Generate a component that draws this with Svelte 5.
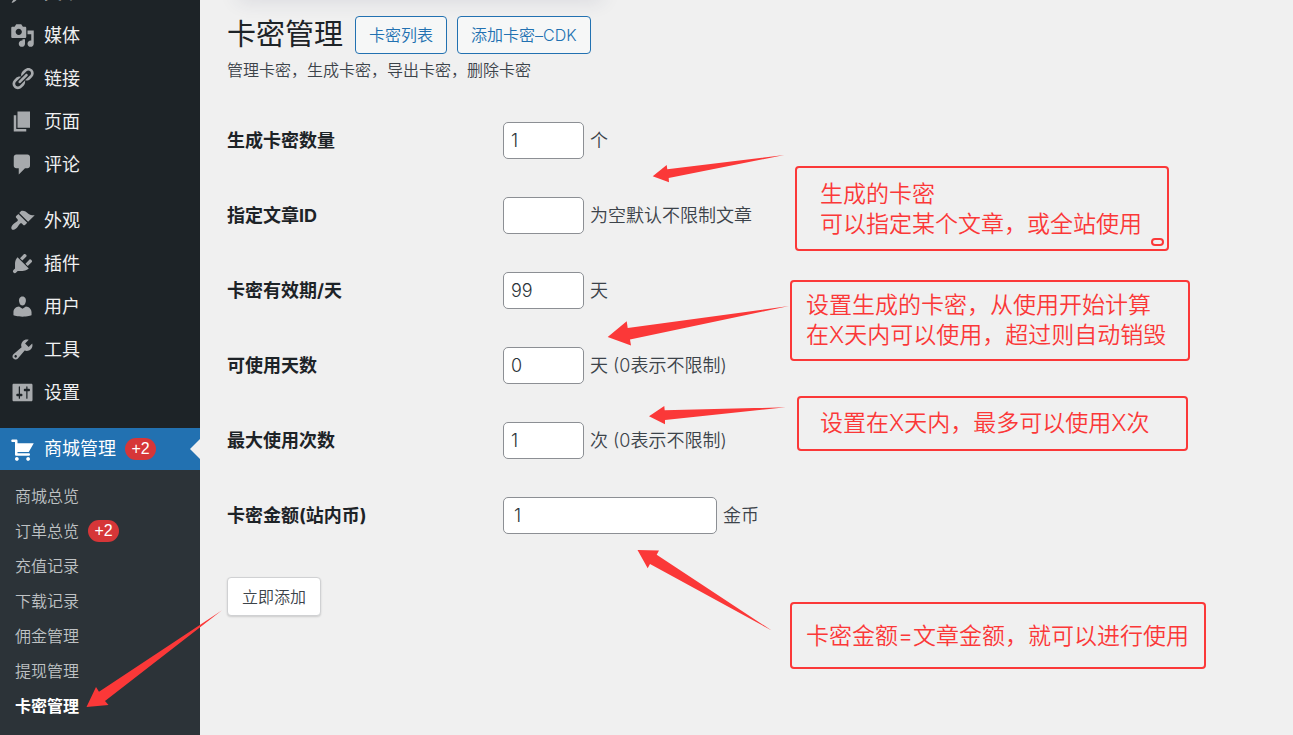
<script>
  const icons = {
    post: 'M10.44 3.02l1.82-1.82 6.36 6.35-1.83 1.82c-1.05-.68-2.48-.57-3.41.36l-.75.75c-.92.93-1.04 2.35-.35 3.41l-1.83 1.82-2.41-2.41-2.8 2.79c-.42.42-3.38 2.71-3.8 2.29s1.86-3.39 2.28-3.81l2.79-2.79L4.1 9.36l1.83-1.82c1.05.69 2.48.57 3.4-.36l.75-.75c.93-.92 1.05-2.35.36-3.41z',
    media: 'M13 11V4c0-.55-.45-1-1-1h-1.67L9 1H5L3.67 3H2c-.55 0-1 .45-1 1v7c0 .55.45 1 1 1h10c.55 0 1-.45 1-1zM7 4.5c1.38 0 2.5 1.12 2.5 2.5S8.38 9.5 7 9.5 4.5 8.38 4.5 7 5.62 4.5 7 4.5zM14 6h5v10.5c0 1.38-1.12 2.5-2.5 2.5S14 17.88 14 16.5s1.12-2.5 2.5-2.5c.17 0 .34.02.5.05V9h-3V6zm-4 8.05V13h2v3.5c0 1.38-1.12 2.5-2.5 2.5S7 17.88 7 16.5 8.12 14 9.5 14c.17 0 .34.02.5.05z',
    links: 'M17.74 2.76c1.68 1.69 1.68 4.41 0 6.1l-1.53 1.52c-1.12 1.12-2.7 1.47-4.14 1.09l2.62-2.61.76-.77.76-.76c.84-.84.84-2.2 0-3.04-.84-.85-2.2-.85-3.04 0l-.77.76-3.38 3.38c-.37-1.44-.02-3.02 1.1-4.14l1.52-1.53c1.69-1.68 4.42-1.68 6.1 0zM8.59 13.43l5.34-5.34c.42-.42.42-1.1 0-1.52-.44-.43-1.13-.39-1.53 0l-5.33 5.34c-.42.42-.42 1.1 0 1.52.44.43 1.13.39 1.52 0zm-.76 2.29l4.14-4.15c.38 1.44.03 3.02-1.09 4.14l-1.52 1.53c-1.69 1.68-4.41 1.68-6.1 0-1.68-1.68-1.68-4.42 0-6.1l1.53-1.52c1.12-1.12 2.7-1.47 4.14-1.1l-4.14 4.15c-.85.84-.85 2.2 0 3.05.84.84 2.2.84 3.04 0z',
    page: 'M6 15V2h10v13H6zm-1 1h8v2H3V5h2v11z',
    comments: 'M5 2h9c1.1 0 2 .9 2 2v7c0 1.1-.9 2-2 2h-2l-5 5v-5H5c-1.1 0-2-.9-2-2V4c0-1.1.9-2 2-2z',
    appearance: 'M14.48 11.06L7.41 3.99l1.5-1.5c.5-.56 2.3-.47 3.51.32 1.21.8 1.43 1.28 2.91 2.1 1.18.64 2.45 1.26 4.45.85zm-.71.71L6.7 4.7 4.93 6.47c-.39.39-.39 1.02 0 1.41l1.06 1.06c.39.39.39 1.03 0 1.42-.6.6-1.43 1.11-2.21 1.69-.35.26-.7.53-1.01.84C1.43 14.23.4 16.08 1.4 17.07c.99 1 2.84-.03 4.18-1.36.31-.31.58-.66.85-1.02.57-.78 1.08-1.61 1.69-2.21.39-.39 1.02-.39 1.41 0l1.06 1.06c.39.39 1.02.39 1.41 0z',
    plugins: 'M13.11 4.36L9.87 7.6 8 5.73l3.24-3.24c.35-.34 1.05-.2 1.56.32.52.51.66 1.21.31 1.55zm-8 1.77l.91-1.12 9.01 9.01-1.19.84c-.71.71-2.63 1.16-3.82 1.16H6.14L4.9 17.26c-.59.59-1.54.59-2.12 0-.59-.58-.59-1.53 0-2.12l1.24-1.24v-3.88c0-1.13.4-3.19 1.09-3.89zm7.26 3.97l3.24-3.24c.34-.35 1.04-.21 1.55.31.52.51.66 1.21.31 1.55l-3.24 3.25z',
    users: 'M10 9.25c-2.27 0-2.73-3.44-2.73-3.44C7 4.02 7.82 2 9.97 2c2.16 0 2.98 2.02 2.71 3.81 0 0-.41 3.44-2.68 3.44zm0 2.57L12.72 10c2.39 0 4.52 2.33 4.52 4.53v2.49s-3.65 1.13-7.24 1.13c-3.65 0-7.24-1.13-7.24-1.13v-2.49c0-2.25 1.94-4.48 4.47-4.48z',
    tools: 'M16.68 9.77c-1.34 1.34-3.3 1.67-4.95.99l-5.41 6.52c-.99.99-2.59.99-3.58 0s-.99-2.59 0-3.57l6.52-5.42c-.68-1.65-.35-3.61.99-4.95 1.28-1.28 3.12-1.62 4.72-1.06l-2.89 2.89 2.82 2.82 2.86-2.87c.53 1.58.18 3.39-1.08 4.65zM3.81 16.21c.4.39 1.04.39 1.43 0 .4-.4.4-1.04 0-1.43-.39-.4-1.03-.4-1.43 0-.39.39-.39 1.03 0 1.43z',
    settings: 'M18 16V4c0-.55-.45-1-1-1H3c-.55 0-1 .45-1 1v12c0 .55.45 1 1 1h14c.55 0 1-.45 1-1zM8 11h1c.55 0 1 .45 1 1s-.45 1-1 1H8v1.5c0 .28-.22.5-.5.5s-.5-.22-.5-.5V13H6c-.55 0-1-.45-1-1s.45-1 1-1h1V5.5c0-.28.22-.5.5-.5s.5.22.5.5V11zm5-2h-1c-.55 0-1-.45-1-1s.45-1 1-1h1V5.5c0-.28.22-.5.5-.5s.5.22.5.5V7h1c.55 0 1 .45 1 1s-.45 1-1 1h-1v5.5c0 .28-.22.5-.5.5s-.5-.22-.5-.5V9z',
    cart: 'M6 13h9c.55 0 1 .45 1 1s-.45 1-1 1H5c-.55 0-1-.45-1-1V4H2c-.55 0-1-.45-1-1s.45-1 1-1h3c.55 0 1 .45 1 1v2h13l-4 7H6v1zm-.5 3c.83 0 1.5.67 1.5 1.5S6.33 19 5.5 19 4 18.33 4 17.5 4.67 16 5.5 16zm9 0c.83 0 1.5.67 1.5 1.5s-.67 1.5-1.5 1.5-1.5-.67-1.5-1.5.67-1.5 1.5-1.5z'
  };

  const groups = [
    [
      { icon: 'post', label: '文章' },
      { icon: 'media', label: '媒体' },
      { icon: 'links', label: '链接' },
      { icon: 'page', label: '页面' },
      { icon: 'comments', label: '评论' }
    ],
    [
      { icon: 'appearance', label: '外观' },
      { icon: 'plugins', label: '插件' },
      { icon: 'users', label: '用户' },
      { icon: 'tools', label: '工具' },
      { icon: 'settings', label: '设置' }
    ]
  ];

  const submenu = [
    { label: '商城总览' },
    { label: '订单总览', badge: '+2' },
    { label: '充值记录' },
    { label: '下载记录' },
    { label: '佣金管理' },
    { label: '提现管理' },
    { label: '卡密管理', current: true }
  ];

  const fields = [
    { id: 'count', label: '生成卡密数量', value: '1', hint: '个' },
    { id: 'post-id', label: '指定文章ID', value: '', hint: '为空默认不限制文章' },
    { id: 'expiry', label: '卡密有效期/天', value: '99', hint: '天' },
    { id: 'days', label: '可使用天数', value: '0', hint: '天 (0表示不限制)' },
    { id: 'uses', label: '最大使用次数', value: '1', hint: '次 (0表示不限制)' },
    { id: 'price', label: '卡密金额(站内币)', value: '1', hint: '金币', wide: true }
  ];
</script>

{#snippet glyph(name)}
  <svg class="icon" viewBox="0 0 20 20" aria-hidden="true"><path d={icons[name]} /></svg>
{/snippet}

<div class="page" lang="zh-CN">
  <nav class="sidebar">
    {#each groups as group}
      <ul class="group">
        {#each group as item}
          <li><a class="item" href="#{item.icon}">{@render glyph(item.icon)}<span>{item.label}</span></a></li>
        {/each}
      </ul>
    {/each}
    <a class="item active" href="#shop">
      {@render glyph('cart')}<span>商城管理</span><span class="badge">+2</span>
    </a>
    <ul class="submenu">
      {#each submenu as item}
        <li>
          <a class="sub" class:current={item.current} href="#sub">
            <span>{item.label}</span>{#if item.badge}<span class="badge">{item.badge}</span>{/if}
          </a>
        </li>
      {/each}
    </ul>
  </nav>

  <main>
    <header>
      <h1>卡密管理</h1>
      <a class="action" href="#list">卡密列表</a>
      <a class="action" href="#add">添加卡密–CDK</a>
    </header>
    <p class="intro">管理卡密，生成卡密，导出卡密，删除卡密</p>

    <form onsubmit={(e) => e.preventDefault()}>
      {#each fields as field}
        <div class="row">
          <label for={field.id}>{field.label}</label>
          <div class="control">
            <input id={field.id} class:wide={field.wide} type="text" value={field.value} />
            <span>{field.hint}</span>
          </div>
        </div>
      {/each}
      <button type="submit">立即添加</button>
    </form>
  </main>

  <svg class="arrows" width="1293" height="735" viewBox="0 0 1293 735" aria-hidden="true">
    <path d="M784.3 155L667.3 169.3 666.7 165 652.7 176.300 669 182.300 668.700 177.900z" />
    <path d="M789 306L627.700 328 626.700 321.300 607.700 337 631 345.600 630 339.600z" />
    <path d="M785.700 407.300L664.700 410.300 664.300 406 649 416.300 665 424.200 665 420z" />
    <path d="M771.700 630.500L656.700 554.700 659 550.500 637.500 550 647.700 568.300 650 564z" />
    <path d="M221.700 610.500L99 691.700 96 687 86.500 707 108.500 705 105 701z" />
  </svg>
  <aside class="note scope">生成的卡密<br />可以指定某个文章，或全站使用<i class="nub"></i></aside>
  <aside class="note term">设置生成的卡密，从使用开始计算<br />在X天内可以使用，超过则自动销毁</aside>
  <aside class="note limit">设置在X天内，最多可以使用X次</aside>
  <aside class="note amount">卡密金额=文章金额，就可以进行使用</aside>
</div>

<style>
  :global(body) {
    background: #f0f0f0;
  }

  .page,
  .page * {
    box-sizing: border-box;
  }

  .page {
    position: relative;
    display: flex;
    min-height: 100vh;
    overflow: hidden;
    color: #3c434a;
    font-family: Inter, 'Noto Sans CJK SC', sans-serif;
    font-size: 16px;
    font-weight: 350;
    line-height: 24px;
  }

  a {
    color: inherit;
    text-decoration: none;
  }

  ul {
    margin: 0;
    padding: 0;
    list-style: none;
  }

  .sidebar {
    display: flex;
    flex: 0 0 200px;
    flex-direction: column;
    margin-top: -29px;
    background: #1d2327;
    color: #f0f0f1;
  }

  .group {
    margin-bottom: 13px;
  }

  .item {
    display: flex;
    align-items: center;
    height: 43px;
    padding-left: 10px;
    gap: 9px;
    font-size: 18px;
    font-weight: 400;
  }

  .icon {
    width: 25px;
    height: 25px;
    fill: #a7aaad;
  }

  .active {
    position: relative;
    height: 42px;
    margin-top: 1px;
    background: #2271b1;
    color: #fff;
  }

  .active .icon {
    fill: #fff;
  }

  .active::after {
    position: absolute;
    top: 11px;
    right: 0;
    border: 10px solid transparent;
    border-right-color: #f0f0f0;
    border-left: 0;
    content: '';
  }

  .badge {
    display: inline-flex;
    align-items: center;
    justify-content: center;
    width: 31px;
    height: 22px;
    border-radius: 11px;
    background: #d63638;
    color: #fff;
    font-family: 'Liberation Sans', sans-serif;
    font-size: 16px;
    font-weight: 400;
  }

  .submenu {
    flex: 1;
    padding: 8px 0;
    background: #2c3338;
    color: #bfc2c4;
  }

  .sub {
    display: flex;
    align-items: center;
    height: 35px;
    padding-left: 15px;
    gap: 9px;
  }

  .current {
    color: #fff;
    font-weight: 700;
  }

  main {
    position: relative;
    flex: 1;
    padding: 16px 27px;
  }

  /* Shadow of the panel that is scrolled out above the heading. */
  main::before {
    position: absolute;
    top: -12px;
    left: 40px;
    width: 360px;
    height: 10px;
    box-shadow: 0 0 20px 2px rgb(40 50 90 / 14%);
    content: '';
  }

  header {
    display: flex;
    align-items: center;
    gap: 10px;
  }

  h1 {
    margin: 0 2px 0 0;
    color: #1d2327;
    font-size: 29px;
    font-weight: 400;
    line-height: 38px;
  }

  .action {
    position: relative;
    height: 38px;
    padding: 0 13px;
    border: 1px solid #2271b1;
    border-radius: 4px;
    background: #f6f7f7;
    color: #2271b1;
    line-height: 36px;
  }

  .intro {
    margin: 4px 0 21px;
  }

  .row {
    display: flex;
    align-items: center;
    height: 75px;
    font-size: 18px;
  }

  label {
    flex: 0 0 276px;
    color: #1d2327;
    font-weight: 700;
  }

  .control {
    display: flex;
    align-items: center;
    gap: 6px;
  }

  input {
    width: 81px;
    height: 37px;
    padding: 0 7px;
    border: 1px solid #8c8f94;
    border-radius: 5px;
    background: #fff;
    color: #2c3338;
    font: inherit;
  }

  .wide {
    width: 214px;
    padding: 0 10px;
  }

  button {
    height: 39px;
    margin-top: 24px;
    padding: 0 14px;
    border: 1px solid #d0d1d3;
    border-radius: 4px;
    background: #fff;
    box-shadow: 0 1px 2px rgb(0 0 0 / 15%);
    color: #3c434a;
    font: inherit;
  }

  .arrows {
    position: absolute;
    top: 0;
    left: 0;
    fill: #fb3838;
    pointer-events: none;
  }

  .note {
    position: absolute;
    border: 2px solid #fb3838;
    border-radius: 4px;
    color: #fb3838;
    font-size: 23px;
    line-height: 30px;
    white-space: nowrap;
  }

  .scope {
    top: 166px;
    left: 795px;
    width: 374px;
    padding: 11px 23px 10px;
  }

  .term {
    top: 280px;
    left: 790px;
    width: 400px;
    padding: 8px 14px 9px;
  }

  .limit {
    top: 396px;
    left: 797px;
    width: 391px;
    padding: 10px 21px 11px;
  }

  .amount {
    top: 602px;
    left: 790px;
    width: 416px;
    padding: 17px 14px 16px;
  }

  .nub {
    position: absolute;
    right: 3px;
    bottom: 3px;
    width: 13px;
    height: 8px;
    border: 2px solid #fb3838;
    border-radius: 4px;
  }
</style>
